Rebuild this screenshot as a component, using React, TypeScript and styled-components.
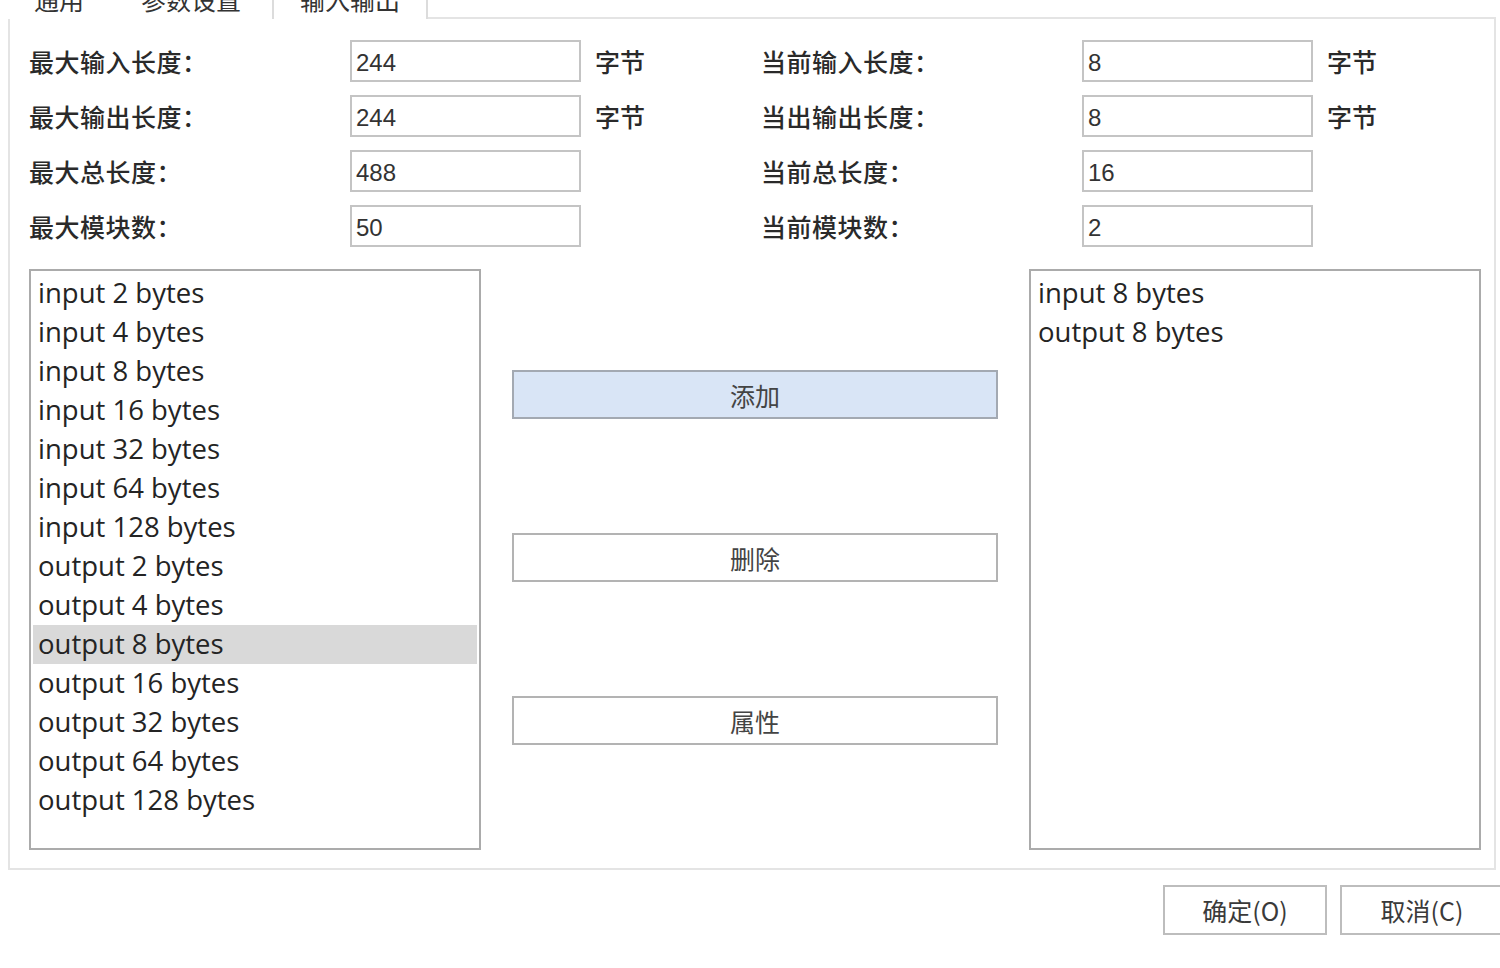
import React from "react";
import styled, { createGlobalStyle } from "styled-components";

const Global = createGlobalStyle`
  html, body { margin: 0; padding: 0; background: #ffffff; overflow: hidden; }
  * { box-sizing: border-box; }
`;

const Page = styled.div`
  width: 1500px;
  height: 968px;
  overflow: hidden;
  background: #ffffff;
  display: flex;
  flex-direction: column;
  font-family: "Noto Sans CJK SC", "Noto Sans", sans-serif;
  color: #2e2e2e;
`;

const TabRow = styled.div`
  display: flex;
  height: 19px;
  padding-left: 8px;
  width: 1496px;
`;

const Tab = styled.div<{ $w: number; $active?: boolean }>`
  width: ${(p) => p.$w}px;
  height: 19px;
  overflow: hidden;
  display: flex;
  justify-content: center;
  border-left: ${(p) => (p.$active ? "2px solid #dcdcdc" : "none")};
  border-right: ${(p) => (p.$active ? "2px solid #dcdcdc" : "none")};
`;

const TabLabel = styled.span`
  display: block;
  font-size: 25px;
  line-height: 26px;
  margin-top: -14px;
  color: #333;
`;

const TabFiller = styled.div`
  flex: 1;
  border-bottom: 2px solid #e4e4e4;
`;

const Panel = styled.div`
  margin-left: 8px;
  width: 1488px;
  height: 851px;
  border: 2px solid #e4e4e4;
  border-top: none;
  padding: 21px 11px 0 19px;
  display: flex;
  flex-direction: column;
`;

const FieldsArea = styled.div`
  display: flex;
`;

const FieldGroup = styled.div<{ $w: number }>`
  width: ${(p) => p.$w}px;
  display: grid;
  grid-template-columns: 321px 231px auto;
  grid-auto-rows: 42px;
  row-gap: 13px;
  align-items: center;
`;

const Label = styled.div`
  font-size: 25px;
  line-height: 42px;
  font-weight: 500;
  color: #2a2a2a;
  white-space: nowrap;
  letter-spacing: 0.5px;
`;

const Field = styled.div`
  height: 42px;
  border: 2px solid #c4c4c4;
  background: #fff;
  padding-left: 4px;
  font-family: "Liberation Sans", Arial, sans-serif;
  font-size: 24px;
  line-height: 42px;
  color: #333;
`;

const Unit = styled.div`
  padding-left: 14px;
  font-size: 25px;
  font-weight: 500;
  color: #2a2a2a;
  line-height: 42px;
`;

const ListsArea = styled.div`
  margin-top: 22px;
  display: flex;
  height: 581px;
`;

const ListBox = styled.div`
  width: 452px;
  height: 581px;
  border: 2px solid #ababab;
  padding: 3px 2px;
  background: #fff;
  font-family: "Open Sans", "Lato", sans-serif;
  font-size: 27.5px;
  color: #242424;
`;

const ListItem = styled.div<{ $selected?: boolean }>`
  height: 39px;
  line-height: 38px;
  padding-left: 5px;
  background: ${(p) => (p.$selected ? "#d9d9d9" : "transparent")};
  white-space: nowrap;
`;

const Middle = styled.div`
  width: 548px;
  padding-top: 101px;
  display: flex;
  flex-direction: column;
  align-items: center;
  gap: 114px;
`;

const ActionButton = styled.div<{ $primary?: boolean }>`
  width: 486px;
  height: 49px;
  border: 2px solid ${(p) => (p.$primary ? "#a3a9b2" : "#b3b3b3")};
  background: ${(p) => (p.$primary ? "#d9e5f6" : "#ffffff")};
  display: flex;
  align-items: center;
  justify-content: center;
  font-size: 25px;
  color: #444;
`;

const Footer = styled.div`
  display: flex;
  justify-content: flex-end;
  gap: 13px;
  padding-top: 15px;
  margin-right: -4px;
`;

const DialogButton = styled.div`
  width: 164px;
  height: 50px;
  border: 2px solid #bdbdbd;
  background: #fff;
  display: flex;
  align-items: center;
  justify-content: center;
  font-size: 25px;
  color: #3a3a3a;
`;

const leftFields = [
  { label: "最大输入长度：", value: "244", unit: "字节" },
  { label: "最大输出长度：", value: "244", unit: "字节" },
  { label: "最大总长度：", value: "488" },
  { label: "最大模块数：", value: "50" },
];

const rightFields = [
  { label: "当前输入长度：", value: "8", unit: "字节" },
  { label: "当出输出长度：", value: "8", unit: "字节" },
  { label: "当前总长度：", value: "16" },
  { label: "当前模块数：", value: "2" },
];

const available = [
  "input 2 bytes",
  "input 4 bytes",
  "input 8 bytes",
  "input 16 bytes",
  "input 32 bytes",
  "input 64 bytes",
  "input 128 bytes",
  "output 2 bytes",
  "output 4 bytes",
  "output 8 bytes",
  "output 16 bytes",
  "output 32 bytes",
  "output 64 bytes",
  "output 128 bytes",
];

const chosen = ["input 8 bytes", "output 8 bytes"];

type F = { label: string; value: string; unit?: string };

const Group = ({ fields, w }: { fields: F[]; w: number }) => (
  <FieldGroup $w={w}>
    {fields.map((f) => (
      <React.Fragment key={f.label}>
        <Label>{f.label}</Label>
        <Field>{f.value}</Field>
        <Unit>{f.unit ?? ""}</Unit>
      </React.Fragment>
    ))}
  </FieldGroup>
);

export default function App() {
  return (
    <>
      <Global />
      <Page>
        <TabRow>
          <Tab $w={102}>
            <TabLabel>通用</TabLabel>
          </Tab>
          <Tab $w={162}>
            <TabLabel>参数设置</TabLabel>
          </Tab>
          <Tab $w={156} $active>
            <TabLabel>输入输出</TabLabel>
          </Tab>
          <TabFiller />
        </TabRow>
        <Panel>
          <FieldsArea>
            <Group fields={leftFields} w={732} />
            <Group fields={rightFields} w={700} />
          </FieldsArea>
          <ListsArea>
            <ListBox>
              {available.map((it) => (
                <ListItem key={it} $selected={it === "output 8 bytes"}>
                  {it}
                </ListItem>
              ))}
            </ListBox>
            <Middle>
              <ActionButton $primary>添加</ActionButton>
              <ActionButton>删除</ActionButton>
              <ActionButton>属性</ActionButton>
            </Middle>
            <ListBox>
              {chosen.map((it) => (
                <ListItem key={it}>{it}</ListItem>
              ))}
            </ListBox>
          </ListsArea>
        </Panel>
        <Footer>
          <DialogButton>确定(O)</DialogButton>
          <DialogButton>取消(C)</DialogButton>
        </Footer>
      </Page>
    </>
  );
}
